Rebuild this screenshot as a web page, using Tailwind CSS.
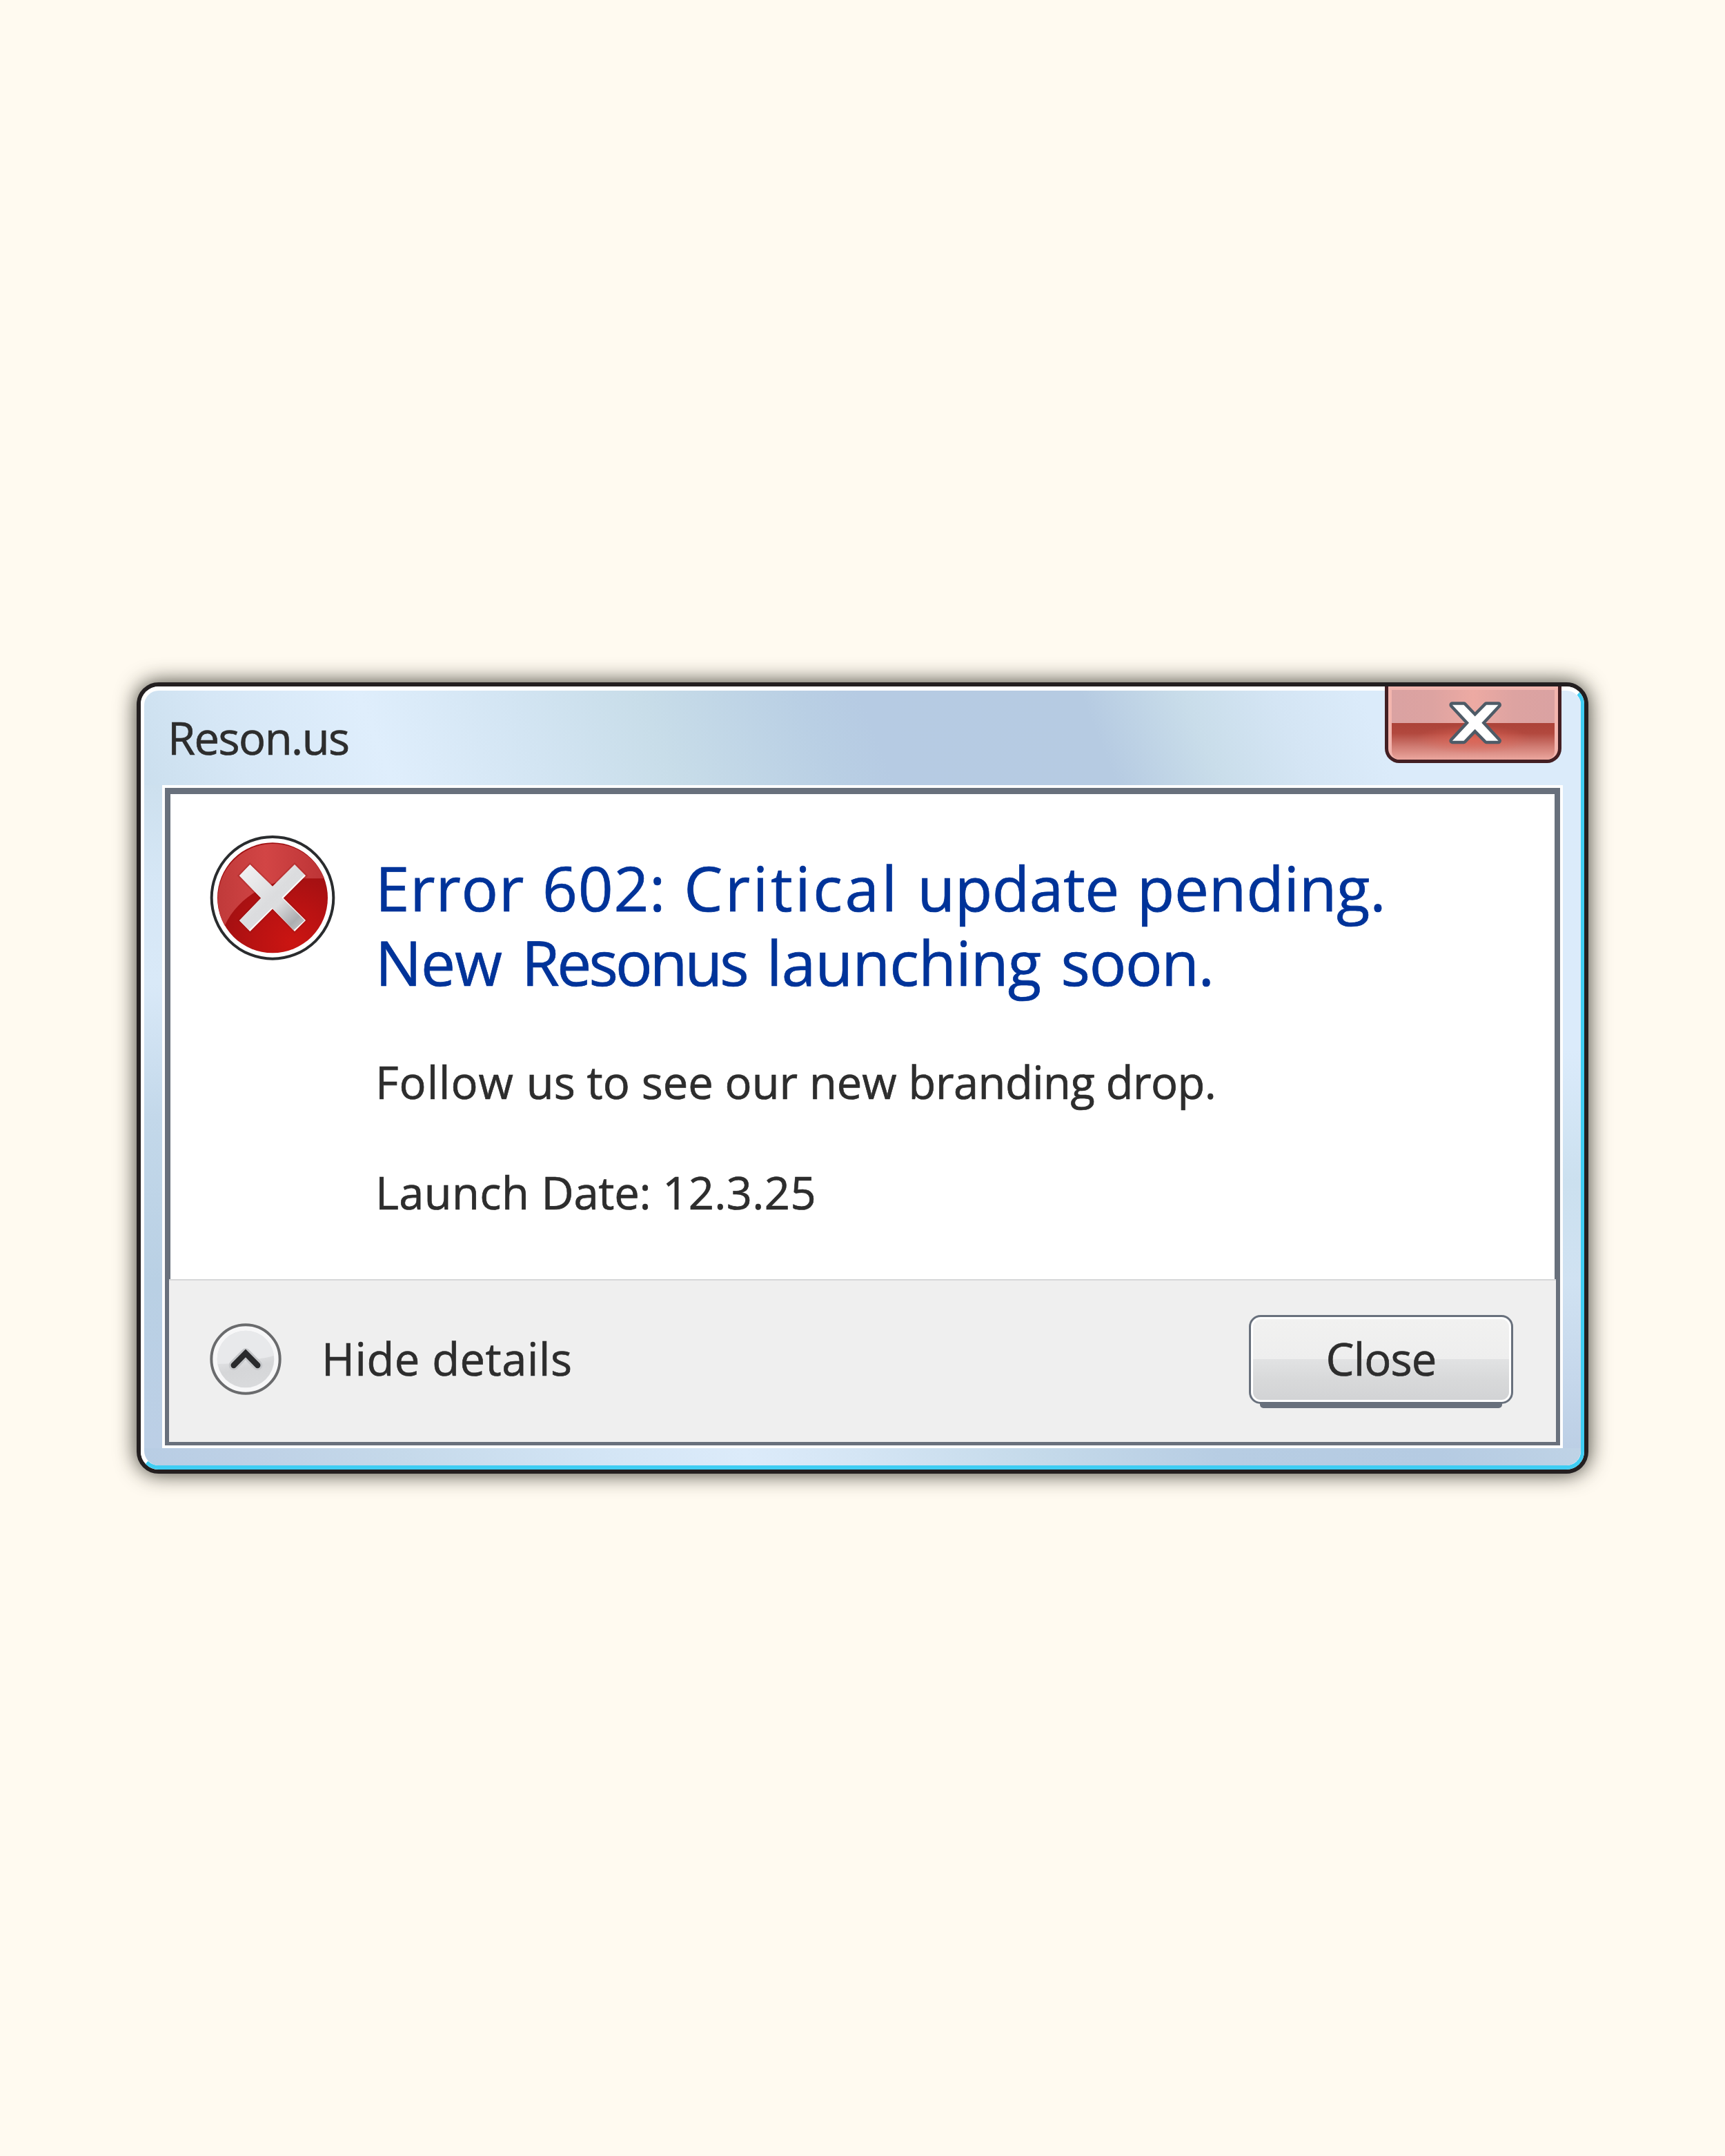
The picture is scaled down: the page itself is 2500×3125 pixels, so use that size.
<!DOCTYPE html>
<html lang="en">
<head>
    <meta charset="UTF-8">
    <meta name="viewport" content="width=device-width, initial-scale=1.0">
    <title>Reson.us</title>
    <script src="https://cdn.jsdelivr.net/npm/@tailwindcss/browser@4"></script>
</head>
<body class="flex min-h-screen items-center justify-center bg-[#fffaf0] font-['Open_Sans',sans-serif] text-[65px] text-[#2d2d2d] [-webkit-text-stroke:0.7px]">

    <!-- Window frame -->
    <div class="h-[1147px] w-[2104px] rounded-[32px] border-6 border-[#231f20] bg-white shadow-[0_0_30px_1px_rgba(25,25,15,0.8)]">
        <div class="flex h-full flex-col rounded-[26px] border-x-5 border-y-6 border-t-white border-r-[#3fcdf3] border-b-[#3fcdf3] border-l-white">

            <!-- Title bar -->
            <header class="relative flex h-[137px] shrink-0 items-center rounded-t-[21px] bg-[linear-gradient(68deg,#cbdfee_0%,#d6e7f6_7%,#dfeefc_17%,#d3e5f3_27%,#c8dde9_36%,#b9cfe4_47%,#b6cbe3_51%,#b6cbe2_66%,#c9ddea_73%,#d4e5f4_79%,#dbebfa_85%,#dbebfa_100%)] pl-[34px]">
                <h1 class="tracking-[-1.5px]">Reson.us</h1>
                <button class="absolute -top-[6px] right-[28px] h-[111px] w-[256px] rounded-b-[21px] border-5 border-t-0 border-[#431f23] bg-[#f3b5ae]">
                    <span class="mx-[5px] mt-[5px] flex h-[101px] flex-col overflow-hidden rounded-b-[12px]">
                        <span class="h-[48px] bg-[linear-gradient(90deg,#daa2a2,#dda3a1_25%,#edaaa3_50%,#dda3a1_75%,#daa2a2)]"></span>
                        <span class="flex-1 bg-[radial-gradient(ellipse_at_50%_45%,rgba(228,104,88,0.75),transparent_50%),linear-gradient(180deg,#ac4339_0%,#b2483e_28%,#d07c73_65%,#eba69e_100%)]"></span>
                    </span>
                    <svg class="absolute top-[20px] left-[86px] h-[65px] w-[80px]" viewBox="415 136 240 196">
                        <path d="M435 156H485L534 207L584 156H636L563 235L636 313H584L534 262L485 313H435L508 235Z" fill="#4e5b67" stroke="#4e5b67" stroke-width="27" stroke-linejoin="round"/>
                        <path d="M435 156H485L534 207L584 156H636L563 235L636 313H584L534 262L485 313H435L508 235Z" fill="#fff"/>
                    </svg>
                </button>
            </header>

            <div class="flex flex-1">
                <div class="w-[26px] bg-[linear-gradient(180deg,#cde0ee_0%,#d6e7f6_15%,#d9e9f8_30%,#c3d8ea_50%,#b9d0e4_75%,#bccfe6_100%)]"></div>

                <!-- Panel -->
                <div class="flex flex-1 flex-col border-4 border-white">
                    <div class="flex flex-1 flex-col border-x-8 border-t-9 border-b-5 border-[#68707c] bg-white">
                        <main class="flex h-[703px] gap-[58px] pl-[57px]">
                            <svg class="mt-[60px] size-[182px] shrink-0" viewBox="42 33 546 546">
                                <defs>
                                    <linearGradient id="cross" x1="0" y1="0" x2="1" y2="1">
                                        <stop offset="0" stop-color="#f4f4f5"/>
                                        <stop offset="0.5" stop-color="#dbdcde"/>
                                        <stop offset="0.6" stop-color="#dcdddf"/>
                                        <stop offset="0.85" stop-color="#acadb0"/>
                                        <stop offset="1" stop-color="#c9cacc"/>
                                    </linearGradient>
                                    <radialGradient id="red" gradientUnits="userSpaceOnUse" cx="400" cy="500" r="330">
                                        <stop offset="0" stop-color="#cb1512"/>
                                        <stop offset="0.5" stop-color="#b91212"/>
                                        <stop offset="1" stop-color="#a01012"/>
                                    </radialGradient>
                                    <linearGradient id="gloss" x1="0" y1="0" x2="1" y2="0">
                                        <stop offset="0" stop-color="#c03a3a"/>
                                        <stop offset="0.45" stop-color="#d24545"/>
                                        <stop offset="1" stop-color="#bd3436"/>
                                    </linearGradient>
                                </defs>
                                <circle cx="315" cy="304" r="265" fill="#fff" stroke="#2a2c2e" stroke-width="12"/>
                                <circle cx="315" cy="304" r="240" fill="url(#red)"/>
                                <path d="M107 425A240 240 0 1 1 540 220H460C320 216 170 290 107 425Z" fill="url(#gloss)"/>
                                <path d="M217 160L315 255L411 160L459 208L362 305L459 402L411 450L315 352L217 450L171 403L265 305L171 208Z" fill="none" stroke="#8c1414" stroke-opacity="0.25" stroke-width="14"/>
                                <path d="M217 160L315 255L411 160L459 208L362 305L459 402L411 450L315 352L217 450L171 403L265 305L171 208Z" fill="#fff"/>
                                <path d="M217 160L315 255L411 160L454 204L355 303L454 402L407 445L313 347L213 444L171 403L265 305L171 208Z" fill="url(#cross)"/>
                            </svg>
                            <div class="pt-[82px]">
                                <h2 class="text-[89px] leading-[107.7px] whitespace-nowrap text-[#003399]">
                                    <span class="block tracking-[0.8px] [word-spacing:2px]">Error 602: <span class="tracking-[3.6px]">Critical</span> <span class="tracking-[-0.4px]">update</span> <span class="tracking-[-0.2px]">pending.</span></span>
                                    <span class="block tracking-[-1px] [word-spacing:7px]">New <span class="tracking-[-3.8px]">Resonus</span> <span class="tracking-[-0.7px]">launching</span> <span class="tracking-[-1.3px]">soon.</span></span>
                                </h2>
                                <p class="mt-[80px] leading-[80px]"><span class="tracking-[1px]">Follow </span>us to see our new <span class="tracking-[-0.5px]">branding drop.</span></p>
                                <p class="mt-[80px] leading-[80px] tracking-[0.4px]">Launch <span class="tracking-[-0.2px]">Date: </span>12.3.25</p>
                            </div>
                        </main>

                        <!-- Footer -->
                        <footer class="-mx-[2px] flex flex-1 items-center border-t-2 border-[#d6d7d8] bg-[#efefef] pr-[62px] pb-[6px] pl-[59px]">
                            <svg class="size-[104px]" viewBox="371 234 312 312">
                                <defs>
                                    <linearGradient id="disc" x1="0.4" y1="0" x2="0.6" y2="1">
                                        <stop offset="0.4" stop-color="#e3e4e6"/>
                                        <stop offset="0.65" stop-color="#d5d6d8"/>
                                        <stop offset="1" stop-color="#d9dadc"/>
                                    </linearGradient>
                                </defs>
                                <circle cx="527" cy="390" r="149" fill="#f7f7f8" stroke="#6a6b6d" stroke-width="12"/>
                                <circle cx="527" cy="390" r="124" fill="url(#disc)"/>
                                <path d="M405 412A124 124 0 1 1 650 374C610 388 590 384 527 400C480 412 440 408 405 412Z" fill="#e8e9eb"/>
                                <path d="M475 417L527 364L579 417" fill="none" stroke="#c4c6c9" stroke-width="42" stroke-linecap="round" stroke-linejoin="round"/>
                                <path d="M475 417L527 364L579 417" fill="none" stroke="#292a2c" stroke-width="25" stroke-linecap="round"/>
                            </svg>
                            <span class="ml-[58px] tracking-[0.55px]">Hide details</span>
                            <button class="relative ml-auto h-[129px] w-[383px]">
                                <span class="absolute inset-x-[16px] -bottom-[6px] h-[20px] rounded-b-[5px] bg-[#68707c]"></span>
                                <span class="relative flex h-full items-center justify-center rounded-[17px] border-3 border-[#68707c] bg-white p-[3px]">
                                    <span class="flex size-full items-center justify-center rounded-[11px] bg-[linear-gradient(180deg,#f1f1f0_0%,#eeeeee_50%,#e1e2e3_50%,#d8d9da_75%,#d2d3d5_100%)] tracking-[-0.8px]">Close</span>
                                </span>
                            </button>
                        </footer>
                    </div>
                </div>

                <div class="w-[26px] bg-[linear-gradient(180deg,#dbebfa_0%,#dbebfb_40%,#cbe0ef_60%,#d0e2f2_75%,#c5d7eb_90%,#bccfe5_100%)]"></div>
            </div>

            <div class="h-[25px] rounded-b-[21px] bg-[linear-gradient(68deg,#b8cde4_0%,#bed1e6_8%,#c5d9ea_18%,#d3e5f5_32%,#dcebfa_42%,#d4e5f4_50%,#c5daea_62%,#b7cde3_75%,#b5cbe2_90%,#bfd3e6_100%)]"></div>
        </div>
    </div>

</body>
</html>
